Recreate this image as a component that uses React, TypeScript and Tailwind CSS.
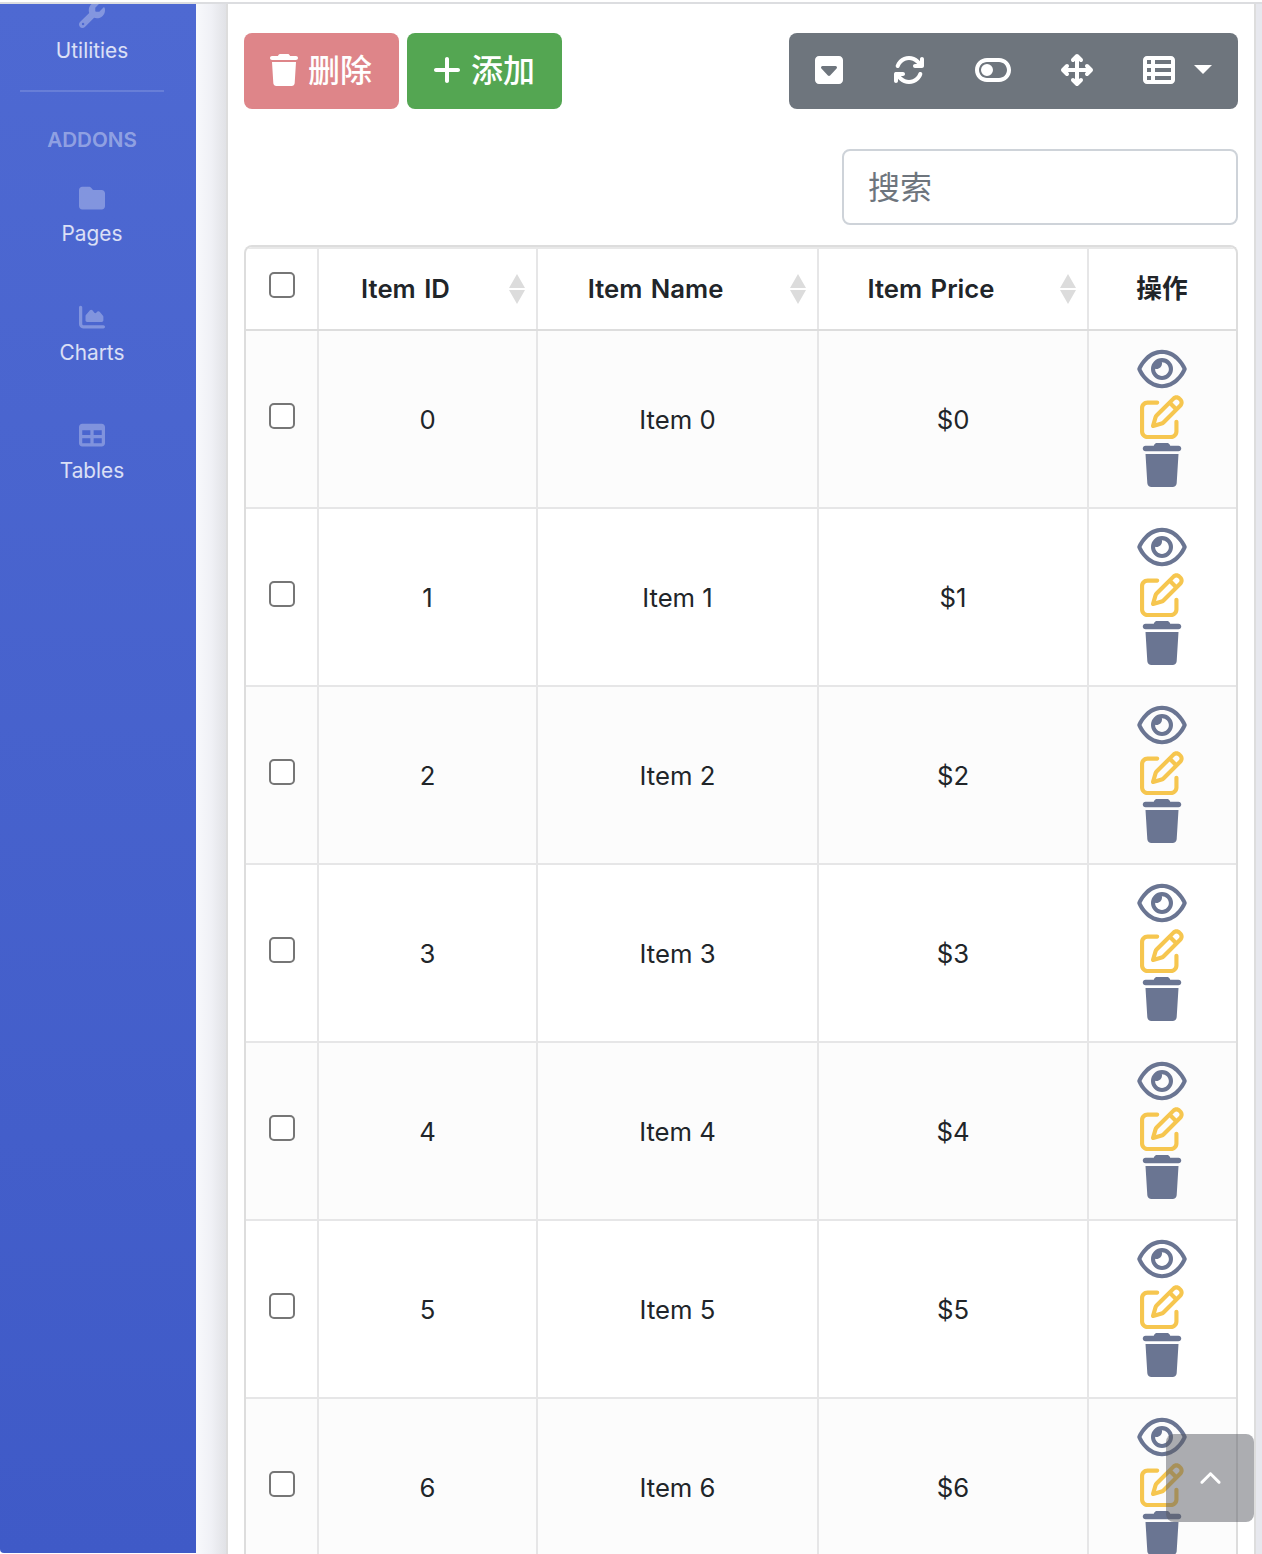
import React from "react";
import {
  FaArrowsRotate,
  FaArrowsUpDownLeftRight,
  FaChartArea,
  FaChevronUp,
  FaFolder,
  FaPlus,
  FaRegEye,
  FaRegPenToSquare,
  FaSquareCaretDown,
  FaTable,
  FaTableList,
  FaToggleOff,
  FaTrash,
  FaWrench,
} from "react-icons/fa6";

const items = [0, 1, 2, 3, 4, 5, 6];
const columns = "grid grid-cols-[73px_219px_281px_270px_147px]";
const cell = "flex items-center justify-center border-r-2 border-[#e6e6e7]";

function NavItem({ icon, label, className }: { icon: React.ReactNode; label: string; className: string }) {
  return (
    <a className={`flex flex-col items-center ${className}`}>
      <span className="text-[26px] text-white/30">{icon}</span>
      <span className="text-[20.8px] leading-[30px] text-white/80">{label}</span>
    </a>
  );
}

function Sidebar() {
  return (
    <aside className="flex h-[1549px] w-[196px] shrink-0 flex-col overflow-hidden rounded-bl-[4px] bg-linear-to-b from-[#4e69d2] to-[#3f5ac7] pr-3">
      <NavItem className="-mt-[2px] gap-2" icon={<FaWrench />} label="Utilities" />
      <hr className="mx-5 mt-6 border-t-2 border-white/15" />
      <div className="mt-[33px] text-center text-[20.6px] leading-[30px] font-semibold text-white/40">ADDONS</div>
      <NavItem className="mt-[30px] gap-2" icon={<FaFolder />} label="Pages" />
      <NavItem className="mt-[55px] gap-2" icon={<FaChartArea />} label="Charts" />
      <NavItem className="mt-[54px] gap-2" icon={<FaTable />} label="Tables" />
    </aside>
  );
}

function Checkbox({ className }: { className: string }) {
  return <span className={`size-[26px] rounded-[5px] border-2 border-[#767676] bg-white ${className}`} />;
}

function SortArrows() {
  return (
    <svg className="h-[30px] w-4" viewBox="0 0 16 30" fill="#dcdcdc">
      <path d="M8 0 16 14H0zM8 30 16 16H0z" />
    </svg>
  );
}

function HeaderCell({ label }: { label: string }) {
  return (
    <div className="flex items-center border-r-2 border-[#e6e6e7] pr-[11px]">
      <span className="flex-1 pr-[17px] text-center [word-spacing:2px]">{label}</span>
      <SortArrows />
    </div>
  );
}

function Row({ id }: { id: number }) {
  return (
    <div className={`${columns} h-[178px] shrink-0 border-b-2 border-[#e6e6e7] ${id % 2 === 0 ? "bg-[#fcfcfc]" : "bg-white"}`}>
      <div className={cell}>
        <Checkbox className="-mt-[6px]" />
      </div>
      <div className={`${cell} pt-[2px]`}>{id}</div>
      <div className={`${cell} pt-[2px]`}>Item {id}</div>
      <div className={`${cell} pt-[2px]`}>${id}</div>
      <div className="flex flex-col items-center gap-1 pt-[15.5px] pr-[1.5px] text-[44px] text-[#6a7592]">
        <FaRegEye className="w-[50px]" />
        <FaRegPenToSquare className="text-[#f6c64f]" />
        <FaTrash />
      </div>
    </div>
  );
}

export default function App() {
  return (
    <div className="relative h-[1554px] w-[1262px] overflow-hidden bg-white pt-[2px] font-['Inter','Noto_Sans_CJK_SC',sans-serif] text-[#212529]">
      <div className="h-[2px] bg-[#dcdde0]" />
      <div className="flex h-[1550px]">
        <Sidebar />
        <div className="w-[30px] shrink-0 bg-linear-to-r from-[#f8f9fc] via-[#f0f1f6] to-[#e1e2e6]" />
        <main className="flex w-[1030px] shrink-0 flex-col border-x-2 border-[#dddddd] bg-white px-4 pt-[29px]">
          <div className="flex h-[76px] shrink-0 gap-2">
            <button className="flex w-[155px] items-center rounded-lg bg-[#de8589] pb-[2px] pl-[26px] text-[32px] leading-none font-medium text-white">
              <FaTrash className="w-[28px]" />
              <span className="pt-[2px] pl-[10px]">删除</span>
            </button>
            <button className="flex w-[155px] items-center rounded-lg bg-[#54a652] pb-[2px] pl-[26px] text-[32px] leading-none font-medium text-white">
              <FaPlus className="w-[28px]" />
              <span className="pt-[2px] pl-[10px]">添加</span>
            </button>
            <div className="ml-auto flex w-[449px] items-center rounded-lg bg-[#6e757d] pb-[2px] pl-[26px] text-[32px] text-white">
              <FaSquareCaretDown className="w-[28px]" />
              <FaArrowsRotate className="ml-[50px]" />
              <FaToggleOff className="ml-[50px] w-[36px]" />
              <FaArrowsUpDownLeftRight className="ml-[50px]" />
              <FaTableList className="ml-[50px]" />
              <svg className="-mt-[2px] ml-[19px] h-[9px] w-[18px]" viewBox="0 0 18 9" fill="currentColor">
                <path d="M0 0H18L9 9z" />
              </svg>
            </div>
          </div>
          <div className="mt-10 flex h-[76px] w-[396px] shrink-0 items-center self-end rounded-lg border-2 border-[#ced3d9] px-6 pt-[2px] text-[32px] text-[#6e757d]">
            搜索
          </div>
          <div className="mt-5 flex w-[994px] shrink-0 flex-col overflow-hidden rounded-t-lg border-2 border-b-0 border-[#dddddd] text-[25.7px]">
            <div className={`${columns} h-[84px] shrink-0 border-t-2 border-b-2 border-t-[#e8e8e8] border-b-[#dddddd] font-semibold`}>
              <div className={cell}>
                <Checkbox className="-mt-[8px]" />
              </div>
              <HeaderCell label="Item ID" />
              <HeaderCell label="Item Name" />
              <HeaderCell label="Item Price" />
              <div className="flex items-center justify-center pt-[1px] pr-[1px] font-bold">操作</div>
            </div>
            {items.map((id) => (
              <Row key={id} id={id} />
            ))}
          </div>
        </main>
        <div className="w-[6px] shrink-0 bg-[#e7e8ee]" />
      </div>
      <button className="absolute top-[1434px] left-[1166px] flex h-[88px] w-[88px] items-center justify-center rounded-lg bg-[#5a5c64]/50 pt-[2px] text-[23px] text-white">
        <FaChevronUp />
      </button>
    </div>
  );
}
